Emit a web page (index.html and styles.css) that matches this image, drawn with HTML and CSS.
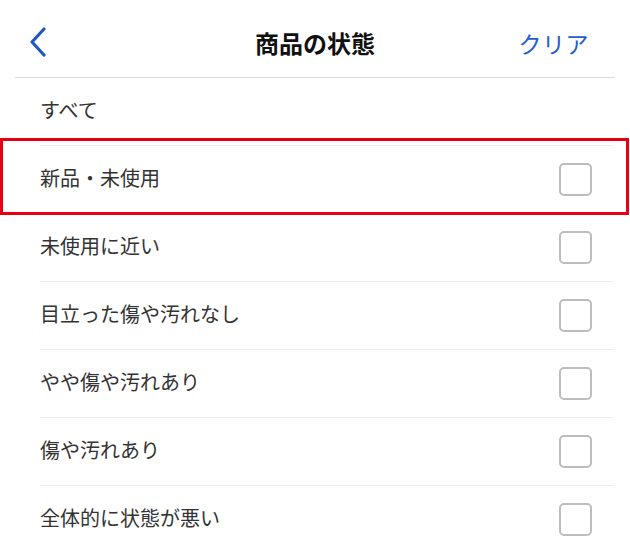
FILE: index.html
```html
<!DOCTYPE html>
<html lang="ja">
<head>
<meta charset="utf-8">
<link rel="stylesheet" href="styles.css">
</head>
<body>
<div class="screen">
  <header class="header">
    <button class="back" aria-label="戻る">
      <svg width="18" height="30" viewBox="0 0 18 30"><polyline points="15,2 3,15 15,28" fill="none" stroke="#1f57c4" stroke-width="3.2" stroke-linecap="round" stroke-linejoin="round"/></svg>
    </button>
    <h1 class="title">商品の状態</h1>
    <span class="clear">クリア</span>
  </header>
  <ul class="list">
    <li class="row"><span class="label">すべて</span></li>
    <li class="row highlighted"><span class="label">新品・未使用</span><span class="box"></span></li>
    <li class="row"><span class="label">未使用に近い</span><span class="box"></span></li>
    <li class="row"><span class="label">目立った傷や汚れなし</span><span class="box"></span></li>
    <li class="row"><span class="label">やや傷や汚れあり</span><span class="box"></span></li>
    <li class="row"><span class="label">傷や汚れあり</span><span class="box"></span></li>
    <li class="row"><span class="label">全体的に状態が悪い</span><span class="box"></span></li>
  </ul>
</div>
</body>
</html>
```
FILE: styles.css
```css
html, body {
  margin: 0;
  padding: 0;
  background: #ffffff;
}
body {
  font-family: "Noto Sans CJK JP", "Noto Sans", sans-serif;
  color: #333333;
  overflow: hidden;
}
.screen {
  width: 630px;
  height: 549px;
  position: relative;
}
.header {
  margin: 0 15px;
  height: 69px;
  padding-top: 8px;
  border-bottom: 1px solid #dcdcdc;
  display: flex;
  align-items: center;
  justify-content: space-between;
  position: relative;
}
.back {
  border: 0;
  background: none;
  padding: 0;
  margin-left: 14px;
  margin-top: -2px;
  width: 18px;
  height: 30px;
  display: flex;
}
.title {
  position: absolute;
  left: 0;
  right: 0;
  top: 8px;
  bottom: 0;
  margin: 0;
  display: flex;
  align-items: center;
  justify-content: center;
  font-size: 24px;
  font-weight: 700;
  color: #111111;
  pointer-events: none;
}
.clear {
  font-size: 23px;
  color: #2460c8;
  margin-right: 26px;
  letter-spacing: 0.5px;
}
.list {
  list-style: none;
  margin: 0 16px 0 40px;
  padding: 0;
}
.row {
  height: 67px;
  border-bottom: 1px solid #ededed;
  display: flex;
  align-items: center;
  justify-content: space-between;
  position: relative;
}
.label {
  font-size: 20px;
  color: #333333;
  margin-top: -4px;
}
.box {
  width: 29px;
  height: 29px;
  border: 2px solid #bdbdbd;
  border-radius: 5px;
  margin-right: 22px;
  margin-top: -1px;
}
.highlighted::after {
  content: "";
  position: absolute;
  top: -8px;
  bottom: -2px;
  left: -40px;
  right: -15px;
  border: 3px solid #e60012;
  pointer-events: none;
}
```
